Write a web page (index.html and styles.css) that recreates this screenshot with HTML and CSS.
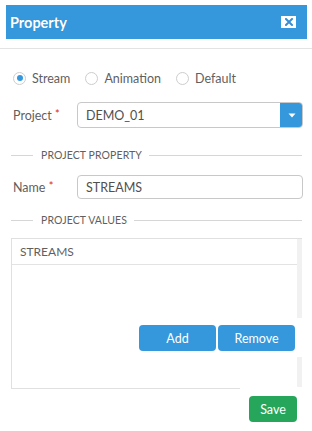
FILE: index.html
```html
<!DOCTYPE html>
<html>
<head>
<meta charset="utf-8">
<link rel="stylesheet" href="styles.css">
</head>
<body>
<div class="header">
  <span class="title">Property</span>
  <span class="close"><svg width="8" height="8" viewBox="0 0 8 8"><path d="M1 1L7 7M7 1L1 7" stroke="#3a8fd4" stroke-width="2" stroke-linecap="square"/></svg></span>
</div>
<div class="rule"></div>
<div class="radios">
  <label class="opt"><span class="radio checked"></span>Stream</label>
  <label class="opt"><span class="radio"></span>Animation</label>
  <label class="opt"><span class="radio"></span>Default</label>
</div>
<div class="form">
  <div class="row project">
    <span class="lbl">Project <span class="req">*</span></span>
    <div class="select">
      <span class="val">DEMO_01</span>
      <span class="caret"><svg width="8" height="5" viewBox="0 0 8 5"><path d="M0.5 0.5H7.5L4 4.5Z" fill="#fff"/></svg></span>
    </div>
  </div>
  <div class="divider d1"><span class="line short"></span><span class="dt">PROJECT PROPERTY</span><span class="line long"></span></div>
  <div class="row name">
    <span class="lbl">Name <span class="req">*</span></span>
    <div class="input">STREAMS</div>
  </div>
  <div class="divider d2"><span class="line short"></span><span class="dt">PROJECT VALUES</span><span class="line long"></span></div>
  <div class="listbox">
    <div class="lhead">STREAMS</div>
    <div class="btnrow">
      <span class="btn blue">Add</span>
      <span class="btn blue">Remove</span>
    </div>
    <span class="scroll"></span>
  </div>
  <div class="footer"><span class="btn green">Save</span></div>
</div>
</body>
</html>
```
FILE: styles.css
```css
html, body { margin: 0; padding: 0; background: #fff; }
body { font-family: Lato, "Open Sans", sans-serif; font-size: 12px; color: #5f5f5f; width: 312px; height: 431px; overflow: hidden; }
.header { margin: 5px 5px 0 6px; height: 34px; background: #3598dc; display: flex; align-items: center; justify-content: space-between; padding: 0 11px 0 4px; }
.title { color: #fff; font-weight: 700; font-size: 14.5px; text-shadow: 0 0 1px rgba(0,0,0,0.15); }
.close { width: 15px; height: 12px; background: #fff; display: flex; align-items: center; justify-content: center; }
.close svg { display: block; }
.rule { margin-top: 9px; height: 1px; background: #e3e3e3; }
.radios { margin-top: 19px; height: 20px; display: flex; align-items: center; padding-left: 13px; gap: 15px; font-size: 12.5px; color: #5f5f5f; }
.opt { display: flex; align-items: center; gap: 6px; }
.radio { width: 11px; height: 11px; border: 1px solid #cdcdcd; border-radius: 50%; display: flex; align-items: center; justify-content: center; background: #fff; }
.radio.checked::after { content: ""; width: 6px; height: 6px; border-radius: 50%; background: #3598dc; }
.form { padding: 0 10px 0 11px; }
.row { display: flex; align-items: center; }
.lbl { width: 64px; padding-left: 2px; font-size: 12.5px; color: #5f5f5f; }
.req { color: #e02222; font-size: 11px; position: relative; top: -2px; }
.project { margin-top: 14px; }
.select { flex: 1; height: 26px; box-sizing: border-box; border: 1px solid #c8c8c8; border-radius: 4px; display: flex; align-items: center; margin-right: -1px; overflow: hidden; }
.val { flex: 1; padding-left: 8px; font-size: 12.5px; color: #505050; }
.caret { width: 23px; height: 26px; background: #3598dc; display: flex; align-items: center; justify-content: center; margin-right: -1px; }
.divider { display: flex; align-items: center; height: 14px; }
.d1 { margin-top: 20px; }
.d2 { margin-top: 14px; }
.line { height: 1px; background: #d6d6d6; }
.short { width: 22px; margin-right: 8px; }
.long { flex: 1; margin-left: 7px; }
.dt { font-size: 10.5px; color: #5f5f5f; letter-spacing: 0.1px; }
.name { margin-top: 13px; }
.input { flex: 1; height: 24px; box-sizing: border-box; border: 1px solid #c8c8c8; border-radius: 4px; padding-left: 8px; display: flex; align-items: center; font-size: 12.5px; color: #505050; margin-right: -1px; }
.listbox { margin-top: 11px; height: 151px; box-sizing: border-box; border-top: 1px solid #e0e0e0; border-left: 1px solid #e0e0e0; position: relative; }
.listbox::after { content: ""; position: absolute; left: -1px; bottom: 0; width: 229px; height: 1px; background: #e0e0e0; }
.lhead { height: 25px; border-bottom: 1px solid #e3e3e3; padding-left: 8px; display: flex; align-items: center; font-size: 12px; color: #5f5f5f; margin-right: 1px; }
.btnrow { margin-top: 53px; padding: 7px 7px 6px 0; display: flex; justify-content: flex-end; gap: 2px; background: #fff; position: relative; z-index: 1; }
.scroll { position: absolute; right: 0; top: 0; bottom: 2px; width: 5px; background: #f1f1f1; }
.btn { height: 26px; border-radius: 4px; color: #fff; display: flex; align-items: center; justify-content: center; font-size: 12.5px; }
.blue { width: 77px; background: #3598dc; }
.green { width: 48px; background: #26a65b; }
.footer { margin-top: 7px; display: flex; justify-content: flex-end; padding-right: 5px; }
```
